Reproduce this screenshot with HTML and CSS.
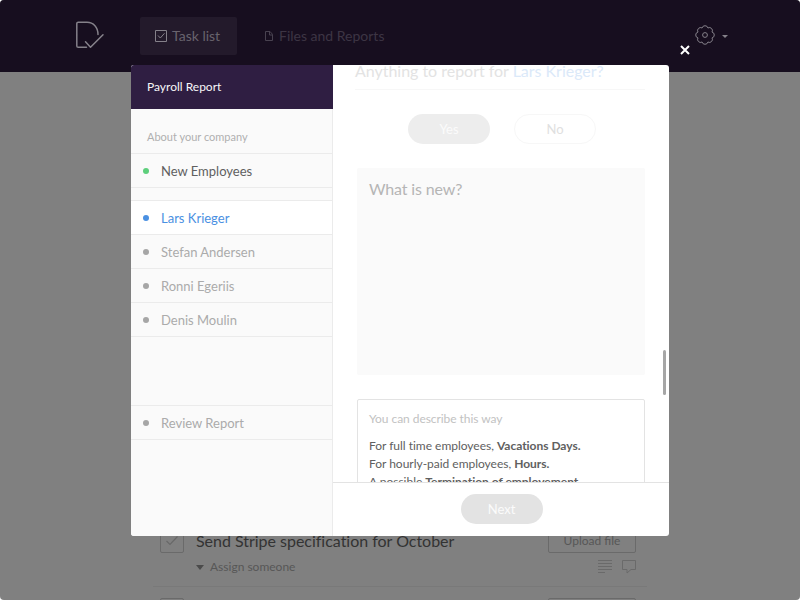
FILE: index.html
```html
<!DOCTYPE html>
<html lang="en">
<head>
<meta charset="utf-8">
<title>Payroll Report</title>
<link rel="stylesheet" href="styles.css">
</head>
<body>
<div class="app">
  <header class="topbar">
    <svg class="logo" width="30" height="30" viewBox="0 0 30 30"><path d="M11.5 26.300H3.200Q1.800 26.300 1.800 24.900V2.600Q1.800 1.300 3.200 1.300H12C18.500 1.300 23 6.500 23 13.500M10.500 20.800L15.500 26.300 28 13.700" fill="none" stroke="#85818a" stroke-width="1.500" stroke-linecap="round" stroke-linejoin="round"/></svg>
    <nav class="nav">
      <a class="tab tab-active"><svg width="12" height="12" viewBox="0 0 12 12" fill="none" stroke="#85818a"><path d="M.5.5h11v11H.5z"/><path d="M3 5.500L5.300 8 9.500 3.300"/></svg><span>Task list</span></a>
      <a class="tab tab-files"><svg width="8" height="10" viewBox="0 0 8 10" fill="none" stroke="#494250"><path d="M.5.5h4.500l2.500 2.800v6.200H.5zM4.500.5v3.500h3"/></svg><span>Files and Reports</span></a>
    </nav>
    <div class="settings">
      <svg width="20" height="20" viewBox="-10 -10 20 20" fill="none" stroke="#85818a"><circle r="2.400"/><path d="M-2.910-7.020A3 3 0 0 1 2.910-7.020A3 3 0 0 1 7.020-2.910A3 3 0 0 1 7.020 2.910A3 3 0 0 1 2.910 7.020A3 3 0 0 1-2.910 7.020A3 3 0 0 1-7.020 2.910A3 3 0 0 1-7.020-2.910A3 3 0 0 1-2.910-7.020Z"/></svg>
      <svg class="caret" width="6" height="3" viewBox="0 0 6 3"><path d="M0 0h6L3 3z" fill="#85818a"/></svg>
    </div>
  </header>
  <main class="tasks">
    <section class="task">
      <div class="check"><svg width="14" height="12" viewBox="0 0 14 12"><path d="M1.500 6L5 9.500 12.500 1.500" fill="none" stroke="#686868" stroke-width="1.200"/></svg></div>
      <div class="task-info">
        <div class="task-title">Send Stripe specification for October</div>
        <div class="assign"><svg width="8" height="5" viewBox="0 0 8 5"><path d="M0 0h8L4 5z" fill="#4b4b4b"/></svg><span>Assign someone</span></div>
      </div>
      <div class="task-side">
        <div class="upload">Upload file</div>
        <div class="task-icons">
          <svg width="14" height="13" viewBox="0 0 14 13" stroke="#6a6a6a"><path d="M0 .5h14M0 3.500h14M0 6.500h14M0 9.500h14M0 12.500h7"/></svg>
          <svg width="14" height="14" viewBox="0 0 14 14" fill="none" stroke="#6a6a6a"><path d="M.5.5h13v9H9L5 13V9.500H.5z"/></svg>
        </div>
      </div>
    </section>
    <section class="task task-next">
      <div class="check"></div>
      <div class="task-info"></div>
      <div class="task-side"><div class="upload"></div></div>
    </section>
  </main>
</div>
<svg class="close" width="10" height="10" viewBox="0 0 10 10"><path d="M1 1l8 8M9 1L1 9" stroke="#fff" stroke-width="2"/></svg>
<div class="modal">
  <aside class="sidebar">
    <h1 class="side-title">Payroll Report</h1>
    <div class="side-label">About your company</div>
    <div class="step done"><i class="dot"></i><span>New Employees</span></div>
    <div class="side-gap"></div>
    <div class="step current"><i class="dot"></i><span>Lars Krieger</span></div>
    <div class="step"><i class="dot"></i><span>Stefan Andersen</span></div>
    <div class="step"><i class="dot"></i><span>Ronni Egeriis</span></div>
    <div class="step"><i class="dot"></i><span>Denis Moulin</span></div>
    <div class="side-gap large"></div>
    <div class="step"><i class="dot"></i><span>Review Report</span></div>
  </aside>
  <div class="content">
    <div class="scroll">
      <h2 class="question">Anything to report for <span class="person">Lars Krieger?</span></h2>
      <div class="answers"><div class="pill yes">Yes</div><div class="pill no">No</div></div>
      <div class="note">What is new?</div>
      <div class="hint">
        <div class="hint-title">You can describe this way</div>
        <div class="hint-line">For full time employees, <b>Vacations Days.</b></div>
        <div class="hint-line">For hourly-paid employees, <b>Hours.</b></div>
        <div class="hint-line">A possible <b>Termination of employement.</b></div>
      </div>
      <div class="scrollbar"></div>
    </div>
    <footer class="footer"><div class="pill next">Next</div></footer>
  </div>
</div>
</body>
</html>
```
FILE: styles.css
```css
* { box-sizing: border-box; }
body { margin: 0; width: 800px; height: 600px; overflow: hidden; background: #fff; font-family: Lato, "Open Sans", sans-serif; position: relative; }
svg { display: block; flex: none; }
.app { width: 800px; height: 600px; background: #808080; border-radius: 4px; overflow: hidden; }
.topbar { height: 72px; background: #170e1f; display: flex; align-items: center; padding: 0 72px 0 75px; }
.logo { margin-right: 35px; }
.nav { display: flex; gap: 12px; }
.tab { display: flex; align-items: center; height: 38px; border-radius: 2px; padding: 0 15px 1px; gap: 5px; font-size: 14px; color: #68636d; white-space: nowrap; }
.tab-active { width: 97px; background: #231a2b; }
.tab-files { padding-left: 16px; color: #3d3544; gap: 6px; }
.settings { display: flex; align-items: center; gap: 7px; margin: -2px 0 0 auto; }
.caret { margin-top: 3px; }
.tasks { padding: 457px 153px 0; }
.task { display: flex; height: 58px; padding: 0 11px 0 7px; border-bottom: 1px solid #797979; }
.task-next { margin-top: 11px; border: 0; }
.check { width: 24px; height: 24px; border: 1px solid #6a6a6a; border-radius: 2px; display: grid; place-items: center; }
.task-info { flex: 1; padding-left: 12px; color: #333; }
.task-title { font-size: 16px; line-height: 24px; letter-spacing: -.02px; white-space: nowrap; }
.assign { display: flex; align-items: center; gap: 6px; margin-top: 6px; font-size: 12px; line-height: 16px; color: #575757; }
.upload { width: 88px; height: 24px; border: 1px solid #6a6a6a; border-radius: 2px; text-align: center; font-size: 12px; line-height: 22px; color: #575757; }
.task-icons { display: flex; justify-content: flex-end; gap: 10px; margin-top: 7px; }
.close { position: absolute; left: 680px; top: 45px; }
.modal { position: absolute; left: 131px; top: 65px; width: 538px; height: 471px; display: flex; border-radius: 3px; overflow: hidden; background: #fff; }
.sidebar { width: 202px; background: linear-gradient(#ebebeb, #ebebeb) right / 1px 100% no-repeat #fafafa; }
.side-title { margin: 0; height: 44px; padding-left: 16px; background: #2f1e42; color: #f7f6f8; font-size: 12px; font-weight: 400; line-height: 44px; }
.side-label { height: 45px; margin-right: 1px; padding: 20px 0 0 16px; border-bottom: 1px solid #ebebeb; font-size: 11px; line-height: 16px; color: #b0b0b0; }
.step { height: 34px; margin-right: 1px; padding-left: 12px; display: flex; align-items: center; gap: 12px; border-bottom: 1px solid #ebebeb; font-size: 13px; color: #ababab; }
.dot { width: 6px; height: 6px; border-radius: 50%; background: #a6a6a6; }
.done { color: #606060; }
.done .dot { background: #5dcf7c; }
.current { background: #fff; color: #4a90e2; }
.current .dot { background: #4a90e2; }
.side-gap { height: 13px; margin-right: 1px; border-bottom: 1px solid #ebebeb; }
.large { height: 69px; }
.content { flex: 1; display: flex; flex-direction: column; min-width: 0; }
.scroll { position: relative; height: 417px; overflow: hidden; padding: 0 24px; }
.question { margin: 0 0 0 -2px; height: 25px; font-size: 16px; font-weight: 400; line-height: 12px; letter-spacing: -.02px; color: #e3e3e3; border-bottom: 1px solid #f7f7f7; white-space: nowrap; }
.person { color: #dbe9f9; }
.answers { display: flex; justify-content: center; gap: 24px; padding: 24px 0; margin: 0 -1px 0 1px; }
.pill { width: 82px; height: 30px; border-radius: 15px; font-size: 13px; line-height: 30px; text-align: center; color: #fbfbfb; }
.yes { background: #ededed; }
.no { border: 1px solid #f7f7f7; line-height: 28px; color: #e0e0e0; }
.note { height: 207px; padding: 11px 12px; border-radius: 2px; background: #fafafa; color: #b5b5b5; font-size: 16px; line-height: 20px; letter-spacing: -.15px; }
.hint { margin-top: 24px; height: 120px; padding: 11px; border: 1px solid #e3e3e3; border-radius: 2px; font-size: 12px; color: #606060; white-space: nowrap; }
.hint-title { line-height: 16px; margin-bottom: 10px; letter-spacing: -.06px; color: #c2c2c2; }
.hint-line { line-height: 18px; letter-spacing: -.02px; }
.scrollbar { position: absolute; right: 3px; top: 285px; width: 3px; height: 45px; border-radius: 2px; background: #a6a6a6; }
.footer { height: 54px; border-top: 1px solid #e3e3e3; display: flex; justify-content: center; padding: 11px 0 0 1px; }
.next { background: #e3e3e3; }
```
